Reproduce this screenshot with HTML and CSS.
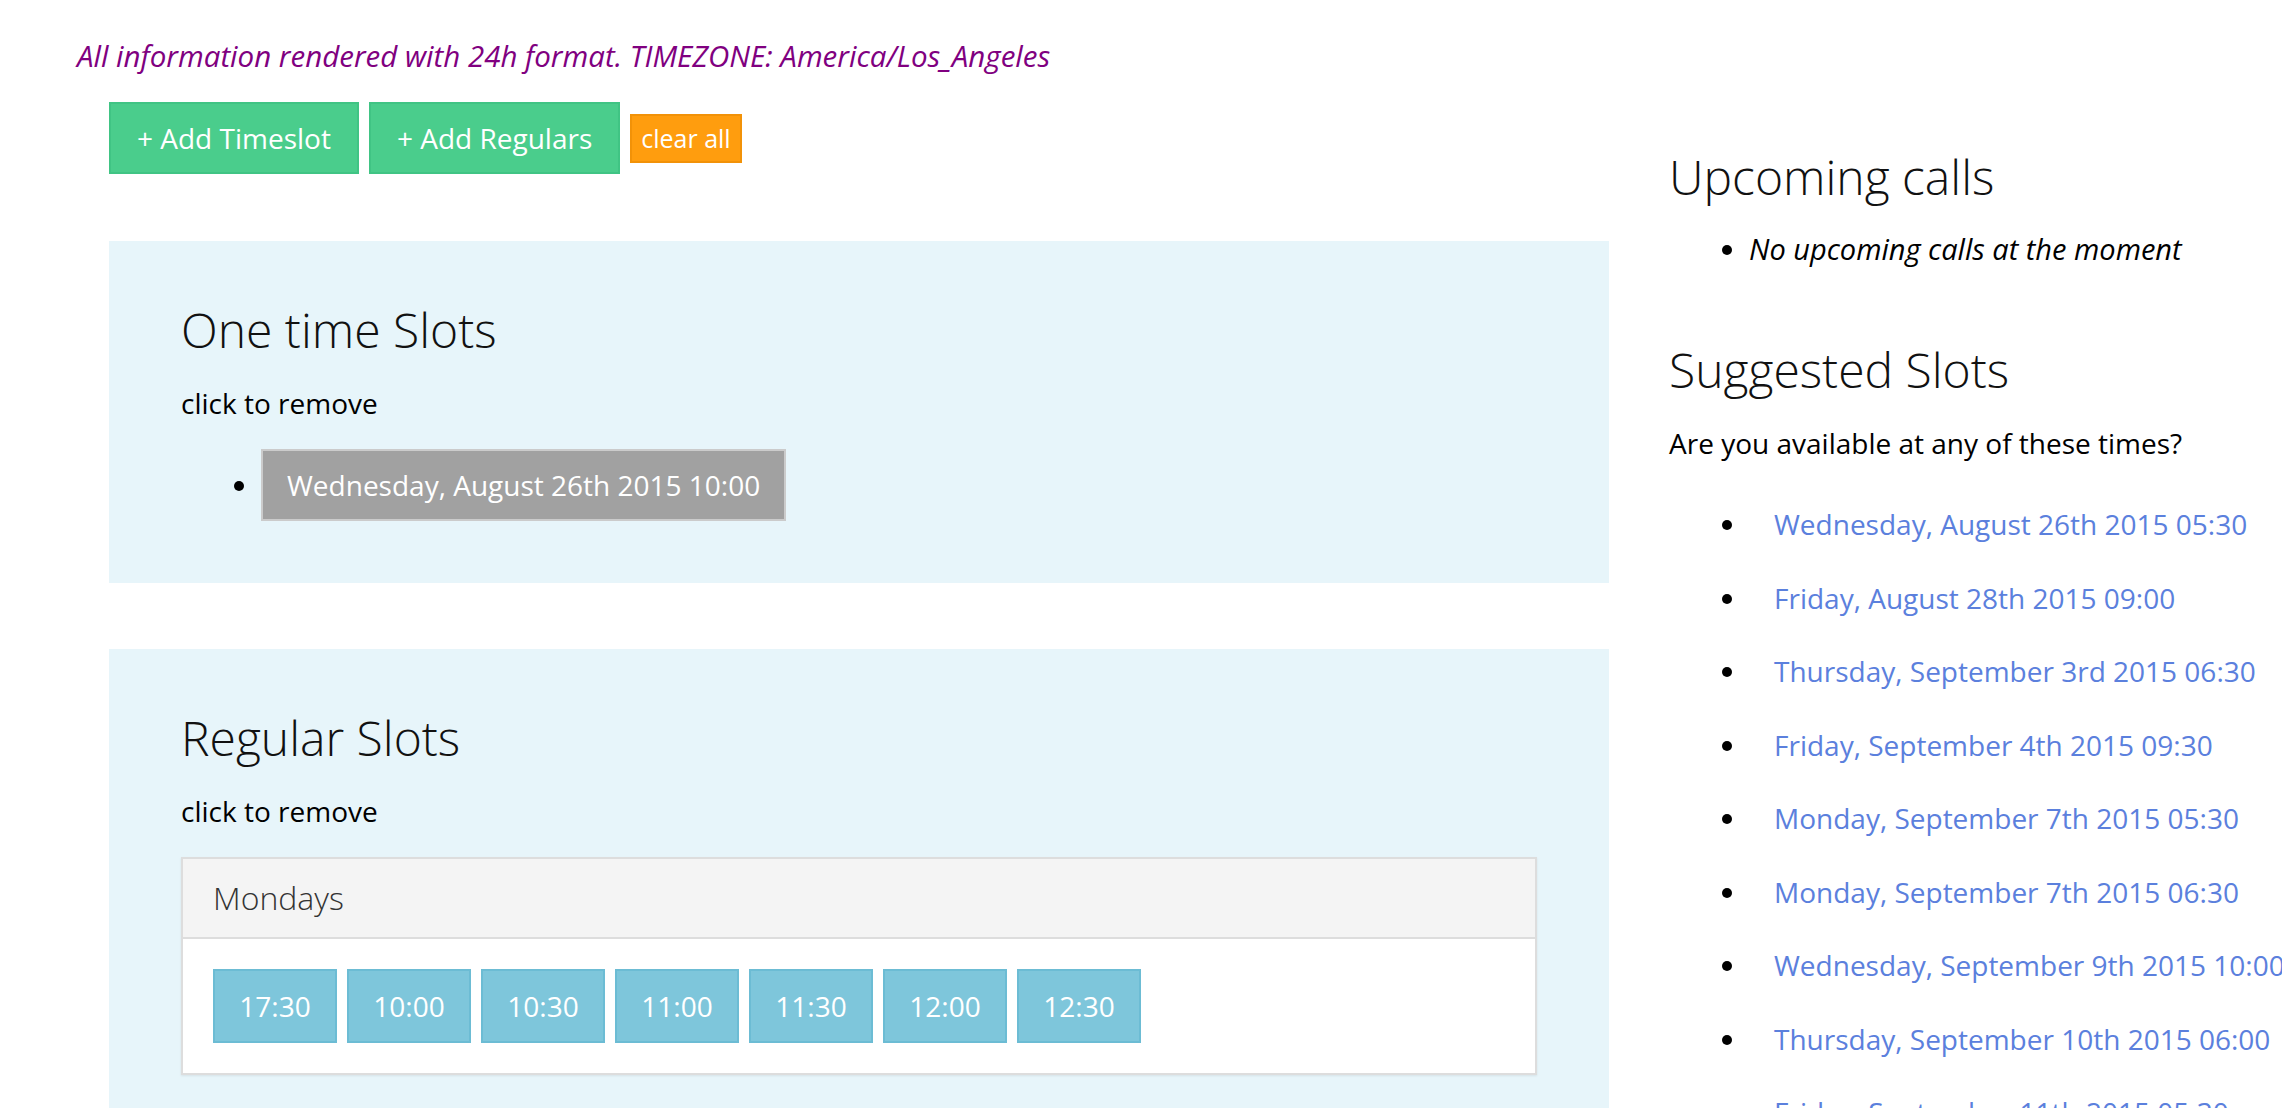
FILE: index.html
```html
<!DOCTYPE html>
<html lang="en">
<head>
<meta charset="utf-8">
<title>Timeslots</title>
<link rel="stylesheet" href="styles.css">
</head>
<body>
<p class="notice">All information rendered with 24h format. TIMEZONE: America/Los_Angeles</p>
<div class="layout">
  <div class="main-col">
    <div class="actions">
      <button class="btn btn-green">+ Add Timeslot</button>
      <button class="btn btn-green">+ Add Regulars</button>
      <button class="btn btn-orange">clear all</button>
    </div>

    <section class="panel panel-first">
      <h2 class="heading">One time Slots</h2>
      <p class="hint">click to remove</p>
      <ul class="slot-list">
        <li><span class="slot">Wednesday, August 26th 2015 10:00</span></li>
      </ul>
    </section>

    <section class="panel">
      <h2 class="heading">Regular Slots</h2>
      <p class="hint">click to remove</p>
      <div class="day-card">
        <div class="day-head">Mondays</div>
        <div class="day-body">
          <span class="time">17:30</span>
          <span class="time">10:00</span>
          <span class="time">10:30</span>
          <span class="time">11:00</span>
          <span class="time">11:30</span>
          <span class="time">12:00</span>
          <span class="time">12:30</span>
        </div>
      </div>
    </section>
  </div>

  <aside class="side-col">
    <h2 class="heading">Upcoming calls</h2>
    <ul class="side-list">
      <li><em class="empty-note">No upcoming calls at the moment</em></li>
    </ul>
    <h2 class="heading heading-suggested">Suggested Slots</h2>
    <p class="question">Are you available at any of these times?</p>
    <ul class="suggest-list">
      <li><a class="suggest" href="#">Wednesday, August 26th 2015 05:30</a></li>
      <li><a class="suggest" href="#">Friday, August 28th 2015 09:00</a></li>
      <li><a class="suggest" href="#">Thursday, September 3rd 2015 06:30</a></li>
      <li><a class="suggest" href="#">Friday, September 4th 2015 09:30</a></li>
      <li><a class="suggest" href="#">Monday, September 7th 2015 05:30</a></li>
      <li><a class="suggest" href="#">Monday, September 7th 2015 06:30</a></li>
      <li><a class="suggest" href="#">Wednesday, September 9th 2015 10:00</a></li>
      <li><a class="suggest" href="#">Thursday, September 10th 2015 06:00</a></li>
      <li><a class="suggest" href="#">Friday, September 11th 2015 05:30</a></li>
    </ul>
  </aside>
</div>
</body>
</html>
```

FILE: styles.css
```css
html, body {
  margin: 0;
  padding: 0;
  background: #ffffff;
  overflow: hidden;
}

body {
  font-family: "Open Sans", "Noto Sans", "Liberation Sans", sans-serif;
  font-size: 28px;
  line-height: 40px;
  color: #000;
  width: 2282px;
  height: 1108px;
}

.notice {
  margin: 36px 0 0 77px;
  font-style: italic;
  color: #800080;
  font-size: 29.5px;
  line-height: 40px;
}

.layout {
  display: flex;
  align-items: flex-start;
  margin: 26px 0 0 109px;
  gap: 60px;
}

.main-col {
  width: 1500px;
  flex: none;
}

.actions {
  display: flex;
  align-items: center;
  gap: 10px;
}

.btn {
  font-family: inherit;
  color: #fff;
  cursor: pointer;
  margin: 0;
}

.btn-green {
  background: #4acd8c;
  border: 2px solid #40c484;
  font-size: 28px;
  line-height: 40px;
  padding: 14px 26px;
}

.btn-orange {
  background: #ff9d0e;
  border: 2px solid #f29208;
  font-size: 25px;
  line-height: 33px;
  padding: 6px 9px;
}

.panel {
  background: #e7f5fa;
  padding: 60px 72px 62px;
  margin-top: 67px;
}

.panel + .panel {
  margin-top: 66px;
  padding-bottom: 60px;
}

.heading {
  margin: 0;
  font-size: 48px;
  line-height: 58px;
  font-weight: 300;
  color: #111;
}

.hint {
  margin: 24px 0 0;
}

.slot-list {
  margin: 26px 0 0;
  padding-left: 80px;
}

.slot {
  display: inline-block;
  background: #a1a1a1;
  border: 2px solid #cbcbcb;
  color: #fff;
  padding: 14px 24px;
  line-height: 40px;
}

.day-card {
  margin-top: 26px;
  background: #fff;
  border: 2px solid #dddddd;
  box-shadow: 0 1px 2px rgba(0, 0, 0, 0.08);
}

.day-head {
  background: #f4f4f4;
  border-bottom: 2px solid #dddddd;
  padding: 17px 30px 18px;
  font-size: 32px;
  line-height: 43px;
  font-weight: 300;
  color: #333;
}

.day-body {
  display: flex;
  gap: 10px;
  padding: 30px;
}

.time {
  box-sizing: border-box;
  width: 124px;
  text-align: center;
  background: #7ec6db;
  border: 2px solid #6cbcd4;
  color: #fff;
  padding: 15px 0;
  line-height: 40px;
}

.side-col {
  flex: none;
  padding-top: 46px;
  white-space: nowrap;
}

.side-list {
  margin: 23px 0 0;
  padding-left: 80px;
}

.empty-note {
  font-size: 29px;
}

.heading-suggested {
  margin-top: 72px;
}

.question {
  margin: 24px 0 0;
}

.suggest-list {
  margin: 25px 0 0;
  padding-left: 80px;
}

.suggest-list li {
  line-height: 73.5px;
}

.suggest {
  color: #5b80dd;
  text-decoration: none;
  padding-left: 25px;
}
```
